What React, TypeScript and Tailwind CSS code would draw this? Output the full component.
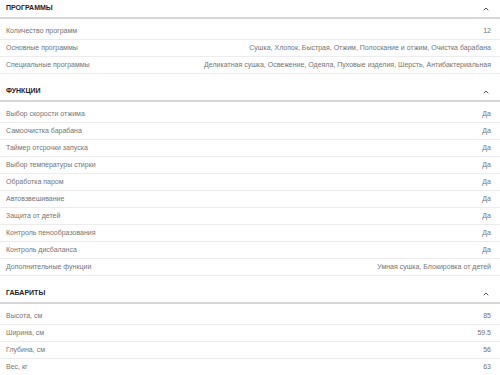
import { ChevronUp } from "lucide-react";

type Row = { label: string; value: string };

const sections: { title: string; rows: Row[] }[] = [
  {
    title: "Программы",
    rows: [
      { label: "Количество программ", value: "12" },
      { label: "Основные программы", value: "Сушка, Хлопок, Быстрая, Отжим, Полоскание и отжим, Очистка барабана" },
      { label: "Специальные программы", value: "Деликатная сушка, Освежение, Одеяла, Пуховые изделия, Шерсть, Антибактериальная" },
    ],
  },
  {
    title: "Функции",
    rows: [
      { label: "Выбор скорости отжима", value: "Да" },
      { label: "Самоочистка барабана", value: "Да" },
      { label: "Таймер отсрочки запуска", value: "Да" },
      { label: "Выбор температуры стирки", value: "Да" },
      { label: "Обработка паром", value: "Да" },
      { label: "Автовзвешивание", value: "Да" },
      { label: "Защита от детей", value: "Да" },
      { label: "Контроль пенообразования", value: "Да" },
      { label: "Контроль дисбаланса", value: "Да" },
      { label: "Дополнительные функции", value: "Умная сушка, Блокировка от детей" },
    ],
  },
  {
    title: "Габариты",
    rows: [
      { label: "Высота, см", value: "85" },
      { label: "Ширина, см", value: "59.5" },
      { label: "Глубина, см", value: "56" },
      { label: "Вес, кг", value: "63" },
    ],
  },
];

export default function App() {
  return (
    <div className="w-[500px] h-[375px] overflow-hidden bg-white font-['Liberation_Sans',Arial,sans-serif]">
      {sections.map((s, i) => (
        <section key={s.title} className={i > 0 ? "mt-[9px]" : ""}>
          {/* Section header */}
          <div className="h-[19px] flex items-center justify-between pl-[6px] pr-[10px] border-b-2 border-[#d6d6d6]">
            <span className="text-[7px] font-bold uppercase text-[#1c1c2a]">{s.title}</span>
            <ChevronUp size={8} strokeWidth={2.5} className="text-[#333]" />
          </div>

          {/* Rows */}
          <div className="pt-[4px]">
            {s.rows.map((r) => (
              <div
                key={r.label}
                className="h-[17px] flex items-center justify-between pl-[6px] pr-[9px] border-b border-[#ececec] text-[7px] text-[#747474]"
              >
                <span className="whitespace-nowrap">{r.label}</span>
                <span className="whitespace-nowrap text-right">{r.value}</span>
              </div>
            ))}
          </div>
        </section>
      ))}
    </div>
  );
}
